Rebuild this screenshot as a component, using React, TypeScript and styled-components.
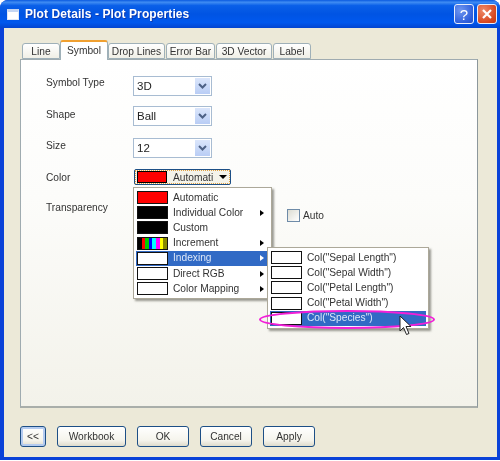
import styled, { createGlobalStyle } from 'styled-components';

const GlobalStyle = createGlobalStyle`
  html, body { margin: 0; padding: 0; background: #fff; }
  body { font-family: "Liberation Sans", Arial, sans-serif; font-size: 10.2px; color: #222; }
`;

const Window = styled.div`
  position: relative;
  width: 500px;
  height: 460px;
  box-sizing: border-box;
  display: flex;
  flex-direction: column;
  border-radius: 8px 8px 0 0;
  overflow: hidden;
  background: #0a42d8;
  filter: blur(0.3px);
`;

const TitleBar = styled.div`
  height: 28px;
  flex: none;
  display: flex;
  align-items: center;
  padding: 0 3px 0 7px;
  background: linear-gradient(180deg, #0a5ae0 0%, #3f8cf3 8%, #0a5fe8 20%, #0054e3 50%, #0058ee 80%, #0345d0 100%);
`;

const AppIcon = styled.div`
  width: 12px;
  height: 11px;
  box-sizing: border-box;
  background: #fff;
  border: 1px solid #dfe8f8;
  border-top: 3px solid #c5d6f3;
  margin-right: 6px;
`;

const Title = styled.div`
  flex: 1;
  color: #fff;
  font-weight: 700;
  font-size: 12px;
  letter-spacing: 0.1px;
  text-shadow: 1px 1px 0 #0f3bb0;
`;

const CaptionButton = styled.div<{ $close?: boolean }>`
  width: 20px;
  height: 20px;
  box-sizing: border-box;
  margin-left: 3px;
  border: 1px solid #e8eefc;
  border-radius: 3px;
  display: flex;
  align-items: center;
  justify-content: center;
  color: #fff;
  font-size: 15px;
  background: ${(p) =>
    p.$close
      ? 'radial-gradient(circle at 30% 30%, #ee8a68, #d8471f 70%, #c23a14)'
      : 'radial-gradient(circle at 30% 30%, #6f97f0, #2f5fdc 70%, #2350c8)'};
`;

const Client = styled.div`
  flex: 1;
  margin: 0 3px 3px 4px;
  background: #ece9d8;
  padding: 12px 19px 0 16px;
  display: flex;
  flex-direction: column;
`;

const TabStrip = styled.div`
  display: flex;
  align-items: flex-end;
  height: 19px;
  padding-left: 2px;
  gap: 1px;
  position: relative;
  z-index: 1;
`;

const Tab = styled.div<{ $w: number; $active?: boolean }>`
  width: ${(p) => p.$w}px;
  box-sizing: border-box;
  height: ${(p) => (p.$active ? 20 : 16)}px;
  margin-bottom: ${(p) => (p.$active ? -1 : 0)}px;
  margin-left: ${(p) => (p.$active ? -1 : 0)}px;
  margin-right: ${(p) => (p.$active ? -1 : 0)}px;
  display: flex;
  align-items: center;
  justify-content: center;
  color: #333;
  border: 1px solid #9fb0b8;
  border-bottom: ${(p) => (p.$active ? 'none' : '1px solid #9fb0b8')};
  border-top: ${(p) => (p.$active ? '2px solid #f0a030' : '1px solid #9fb0b8')};
  border-radius: 3px 3px 0 0;
  background: ${(p) => (p.$active ? '#fff' : 'linear-gradient(180deg, #fff, #f0efe6)')};
  padding-bottom: ${(p) => (p.$active ? 2 : 0)}px;
`;

const Panel = styled.div`
  position: relative;
  height: 349px;
  box-sizing: border-box;
  width: 458px;
  border: 1px solid #9fabb0;
  border-right-color: #8c979c;
  border-bottom: 2px solid #a9aeaa;
  background: linear-gradient(180deg, #fff 0%, #fcfcfa 40%, #f3f2ea 100%);
  padding: 16px 0 0 25px;
  display: flex;
  flex-direction: column;
`;

const Row = styled.div<{ $h: number }>`
  display: flex;
  height: ${(p) => p.$h}px;
`;

const Label = styled.div<{ $top: number }>`
  width: 87px;
  padding-top: ${(p) => p.$top}px;
  color: #333;
`;

const Select = styled.div`
  width: 79px;
  height: 20px;
  box-sizing: border-box;
  border: 1px solid #a8bcd2;
  background: #fff;
  display: flex;
  align-items: center;
  justify-content: space-between;
  padding: 1px 1px 1px 3px;
  font-size: 11.5px;
  color: #222;
`;

const SelectArrow = styled.div`
  width: 15px;
  height: 100%;
  background: linear-gradient(180deg, #dbe6fb, #b9cdf5);
  display: flex;
  align-items: center;
  justify-content: center;
`;

const ColorButton = styled.div`
  width: 97px;
  height: 16px;
  box-sizing: border-box;
  margin-left: 1px;
  border: 1px solid #1d4f86;
  outline: 1px dotted #e0a040;
  outline-offset: -2px;
  border-radius: 2px;
  background: #f4f3ea;
  display: flex;
  align-items: center;
  padding-left: 2px;
  color: #333;
`;

const ButtonSwatch = styled.div`
  width: 30px;
  height: 12px;
  box-sizing: border-box;
  border: 1px solid #000;
  background: #f00;
  margin-right: 6px;
`;

const CaretDown = styled.div`
  width: 0;
  height: 0;
  margin-left: 6px;
  border-left: 4px solid transparent;
  border-right: 4px solid transparent;
  border-top: 4px solid #000;
`;

const AutoCheck = styled.label`
  position: absolute;
  left: 266px;
  top: 149px;
  display: flex;
  align-items: center;
  gap: 3px;
  color: #333;
`;

const CheckBox = styled.span`
  width: 13px;
  height: 13px;
  box-sizing: border-box;
  border: 1px solid #6e8ba8;
  background: linear-gradient(135deg, #dcdcd2, #fff);
`;

const Menu = styled.div<{ $left: number; $top: number; $w: number; $z: number }>`
  position: absolute;
  left: ${(p) => p.$left}px;
  top: ${(p) => p.$top}px;
  width: ${(p) => p.$w}px;
  z-index: ${(p) => p.$z};
  box-sizing: border-box;
  background: #fff;
  border: 1px solid #aca899;
  padding: 2px;
  box-shadow: 2px 2px 2px rgba(90, 90, 80, 0.6);
  display: flex;
  flex-direction: column;
`;

const MenuRow = styled.div<{ $active?: boolean }>`
  height: 15.2px;
  display: flex;
  align-items: center;
  padding-left: 1px;
  color: ${(p) => (p.$active ? '#dce6f7' : '#333')};
  background: ${(p) => (p.$active ? '#316ac5' : 'transparent')};
`;

const Swatch = styled.div<{ $fill: string }>`
  width: 31px;
  height: 13px;
  box-sizing: border-box;
  flex: none;
  border: 1px solid #111;
  margin-right: 5px;
  background: ${(p) => p.$fill};
`;

const MenuText = styled.span`
  flex: 1;
  white-space: nowrap;
  padding-bottom: 1px;
`;

const SubArrow = styled.span<{ $light?: boolean }>`
  width: 0;
  height: 0;
  margin-right: 5px;
  border-top: 3.5px solid transparent;
  border-bottom: 3.5px solid transparent;
  border-left: 4px solid ${(p) => (p.$light ? '#fff' : '#000')};
`;

const Highlight = styled.svg`
  position: absolute;
  left: 238px;
  top: 250px;
  z-index: 3;
  overflow: visible;
  pointer-events: none;
`;

const Cursor = styled.svg`
  position: absolute;
  left: 378px;
  top: 255px;
  z-index: 4;
`;

const Footer = styled.div`
  display: flex;
  margin-top: 18px;
  gap: 11px;
`;

const FootButton = styled.div<{ $w: number; $primary?: boolean }>`
  width: ${(p) => p.$w}px;
  height: 21px;
  box-sizing: border-box;
  border: 1px solid #1d4f86;
  border-radius: 3px;
  display: flex;
  align-items: center;
  justify-content: center;
  color: #333;
  background: linear-gradient(180deg, #fff 0%, #f5f4ec 70%, #dedbcc 100%);
  box-shadow: ${(p) => (p.$primary ? 'inset 0 0 0 2px #b4cbf0' : 'none')};
`;

const INCREMENT = 'linear-gradient(90deg, #000 0 13%, #f00 13% 25%, #0c0 25% 37%, #00f 37% 49%, #0ff 49% 62%, #f0f 62% 75%, #ff0 75% 87%, #880 87% 100%)';

const MAIN_ITEMS = [
  { label: 'Automatic', fill: '#f00' },
  { label: 'Individual Color', fill: '#000', more: true },
  { label: 'Custom', fill: '#000' },
  { label: 'Increment', fill: INCREMENT, more: true },
  { label: 'Indexing', fill: '#fff', more: true, active: true },
  { label: 'Direct RGB', fill: '#fff', more: true },
  { label: 'Color Mapping', fill: '#fff', more: true },
];

const COLUMNS = ['Sepal Length', 'Sepal Width', 'Petal Length', 'Petal Width', 'Species'];

const TABS = [
  { label: 'Line', w: 38 },
  { label: 'Symbol', w: 48, active: true },
  { label: 'Drop Lines', w: 57 },
  { label: 'Error Bar', w: 49 },
  { label: '3D Vector', w: 56 },
  { label: 'Label', w: 38 },
];

const Chevron = () => (
  <svg width="9" height="6" viewBox="0 0 9 6">
    <path d="M1 1l3.5 3.5L8 1" fill="none" stroke="#4d6185" strokeWidth="2" />
  </svg>
);

const Combo = ({ value }: { value: string }) => (
  <Select>
    {value}
    <SelectArrow><Chevron /></SelectArrow>
  </Select>
);

export default function App() {
  return (
    <>
      <GlobalStyle />
      <Window>
        <TitleBar>
          <AppIcon />
          <Title>Plot Details - Plot Properties</Title>
          <CaptionButton>?</CaptionButton>
          <CaptionButton $close>
            <svg width="12" height="12" viewBox="0 0 12 12">
              <path d="M2 2l8 8M10 2l-8 8" stroke="#fff" strokeWidth="2.2" />
            </svg>
          </CaptionButton>
        </TitleBar>
        <Client>
          <TabStrip>
            {TABS.map((t) => (
              <Tab key={t.label} $w={t.w} $active={t.active}>{t.label}</Tab>
            ))}
          </TabStrip>
          <Panel>
            <Row $h={30}><Label $top={1}>Symbol Type</Label><Combo value="3D" /></Row>
            <Row $h={32}><Label $top={3}>Shape</Label><Combo value="Ball" /></Row>
            <Row $h={31}><Label $top={2}>Size</Label><Combo value="12" /></Row>
            <Row $h={32}>
              <Label $top={3}>Color</Label>
              <ColorButton>
                <ButtonSwatch />
                Automati
                <CaretDown />
              </ColorButton>
            </Row>
            <Row $h={20}><Label $top={1}>Transparency</Label></Row>

            <AutoCheck><CheckBox />Auto</AutoCheck>

            <Menu $left={112} $top={127} $w={139} $z={1}>
              {MAIN_ITEMS.map((m) => (
                <MenuRow key={m.label} $active={m.active}>
                  <Swatch $fill={m.fill} />
                  <MenuText>{m.label}</MenuText>
                  {m.more && <SubArrow $light={m.active} />}
                </MenuRow>
              ))}
            </Menu>

            <Menu $left={246} $top={187} $w={162} $z={2}>
              {COLUMNS.map((c) => (
                <MenuRow key={c} $active={c === 'Species'}>
                  <Swatch $fill="#fff" />
                  <MenuText>{`Col("${c}")`}</MenuText>
                </MenuRow>
              ))}
            </Menu>

            <Highlight width="176" height="19" viewBox="0 0 176 19">
              <ellipse cx="88" cy="9.5" rx="87" ry="8.5" fill="none" stroke="#f21fd8" strokeWidth="2" />
            </Highlight>

            <Cursor width="13" height="21" viewBox="0 0 13 21">
              <path d="M1 1v15l3.5-3.5 3 7 2.5-1-3-7h5z" fill="#fff" stroke="#222" strokeWidth="1" />
            </Cursor>
          </Panel>
          <Footer>
            <FootButton $w={26} $primary>&lt;&lt;</FootButton>
            <FootButton $w={69}>Workbook</FootButton>
            <FootButton $w={52}>OK</FootButton>
            <FootButton $w={52}>Cancel</FootButton>
            <FootButton $w={52}>Apply</FootButton>
          </Footer>
        </Client>
      </Window>
    </>
  );
}
